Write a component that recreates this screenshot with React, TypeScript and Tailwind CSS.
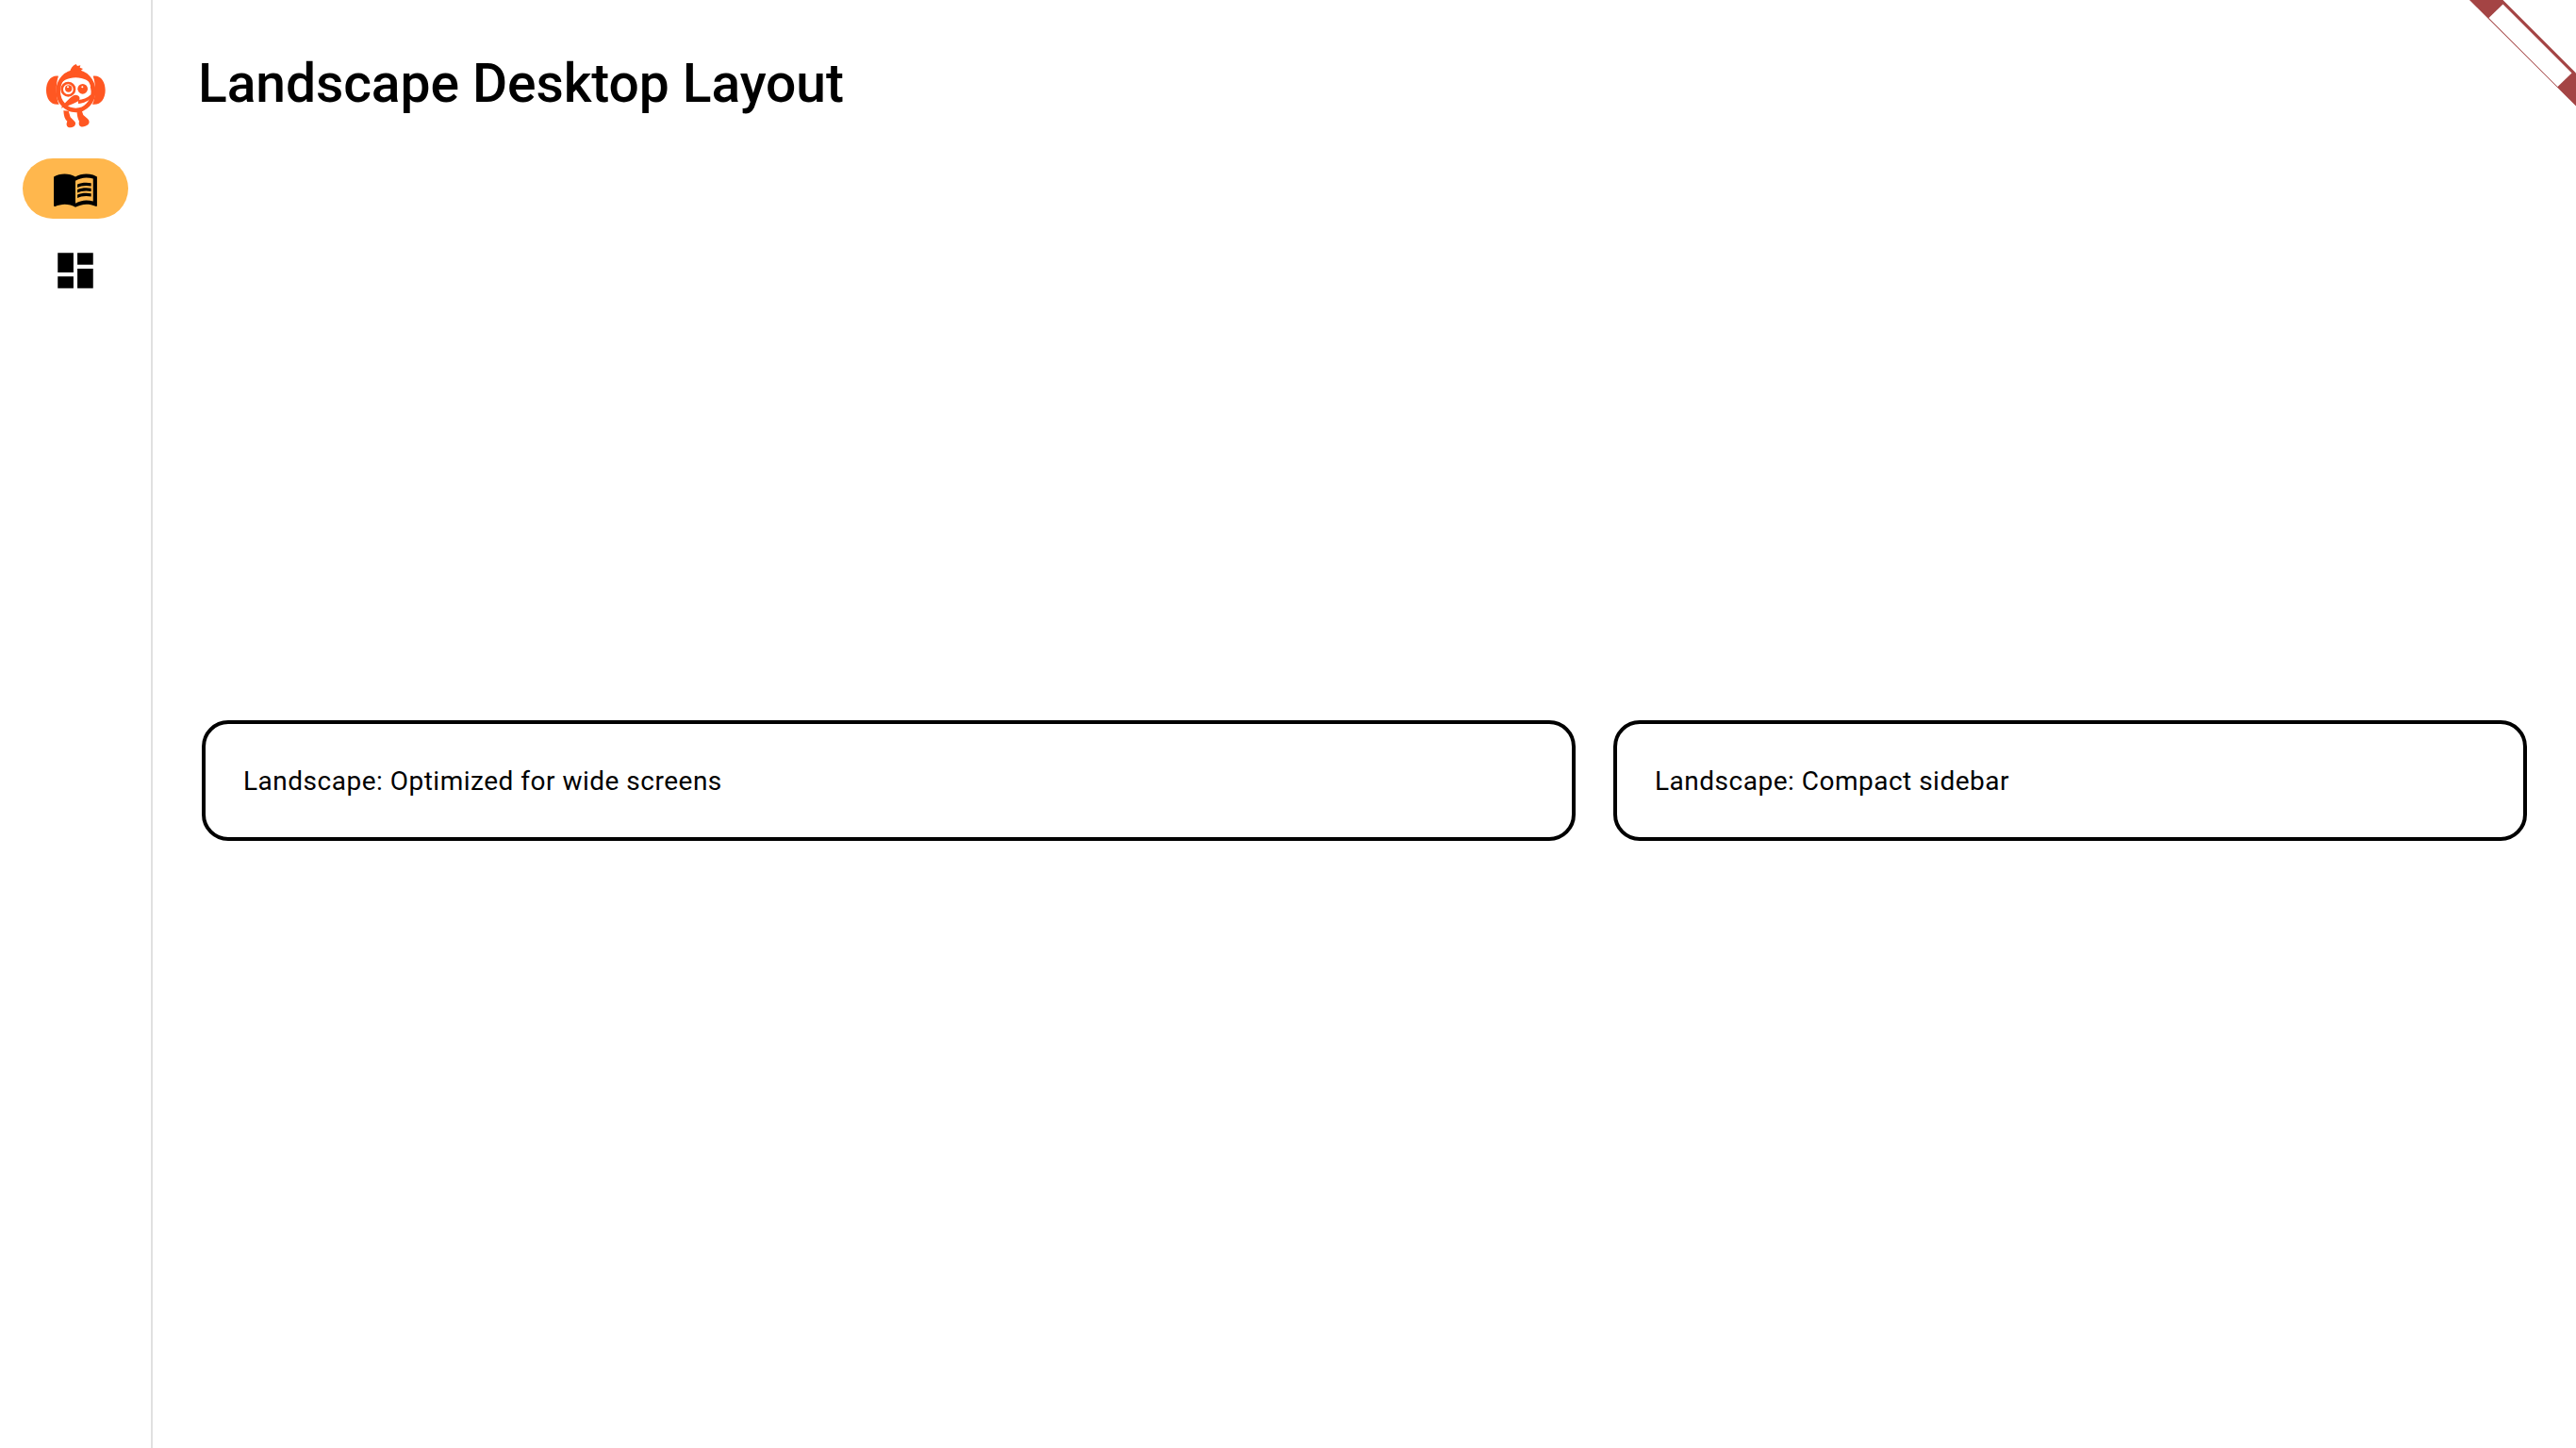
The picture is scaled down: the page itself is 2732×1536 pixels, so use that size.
import { MdDashboard, MdMenuBook } from 'react-icons/md';

function Logo() {
  return (
    <svg viewBox="0 0 216 228" className="h-[76px] w-[72px]" fill="#ff5722">
      {/* tuft */}
      <path d="M90 38c2-12 10-22 20-26l4 6 10-2-2 7 10 4-6 5 4 8c-12-4-28-6-40-2z" />
      {/* ear muffs */}
      <path d="M54 50C30 46 15 68 15 95s15 49 41 45c-10-20-12-65-2-90z" />
      <path d="M164 50c24-4 39 18 39 45s-15 49-41 45c10-20 12-65 2-90z" />
      {/* head */}
      <ellipse cx="109" cy="98" rx="56" ry="61" fill="none" stroke="#ff5722" strokeWidth="14" />
      <path d="M52 84c6-28 30-46 57-46s51 18 57 46c-12-18-32-29-57-29S64 66 52 84z" />
      <path d="M155 84c5 12 6 26 2 40l6-2c4-12 3-28-3-42z" />
      {/* eyes */}
      <circle cx="85" cy="92" r="20" fill="none" stroke="#ff5722" strokeWidth="8" />
      <circle cx="86" cy="90" r="11" />
      <circle cx="131" cy="91" r="16" />
      <circle cx="84" cy="85" r="3" fill="#fff" />
      <circle cx="130" cy="85" r="3" fill="#fff" />
      {/* beak and smile */}
      <path d="M62 152c8-12 24-30 38-39 8-5 19-2 21 5 2 6-2 11-8 14-16 8-34 15-51 20z" />
      <path d="M116 126c15 0 30-6 41-17l3 9c-9 11-26 19-43 20z" />
      {/* feet */}
      <path d="M70 160l16 1 6 20 14 14c6 8-1 18-13 19-10 1-14-6-13-14l2-6c-8-6-11-18-12-34z" />
      <path d="M112 158l15-1 6 17 13 11c7 6 8 14 2 20-6 5-18 9-24 5-5-3-6-9-4-16-5-9-7-22-8-36z" />
    </svg>
  );
}

function App() {
  return (
    <div className="relative flex h-screen w-full overflow-hidden bg-white font-['Roboto',sans-serif] text-black">
      <aside className="flex w-[162px] shrink-0 flex-col items-center border-r-2 border-[#e0e0e0] pt-16">
        <Logo />
        <div className="mt-7 flex h-16 w-28 items-center justify-center rounded-full bg-[#ffb74d]">
          <MdMenuBook size={50} />
        </div>
        <div className="mt-[30px] flex h-[50px] items-center justify-center">
          <MdDashboard size={50} />
        </div>
      </aside>

      <main className="flex min-w-0 flex-1 flex-col px-[52px]">
        <header className="h-[120px] shrink-0 pt-14">
          <h1 className="-ml-[4px] text-[57px] leading-[66px] font-medium tracking-[-0.1px]">Landscape Desktop Layout</h1>
        </header>
        <div className="grid flex-1 grid-cols-[1457fr_969fr] items-center gap-10">
          <div className="flex h-[128px] items-center rounded-[28px] border-4 border-black px-10 pt-0.5">
            <span className="text-[28px] tracking-[0.5px]">Landscape: Optimized for wide screens</span>
          </div>
          <div className="flex h-[128px] items-center rounded-[28px] border-4 border-black px-10 pt-0.5">
            <span className="text-[28px] tracking-[0.5px]">Landscape: Compact sidebar</span>
          </div>
        </div>
      </main>

      {/* corner ribbon */}
      <svg className="absolute top-0 right-0" width="132" height="120" viewBox="0 0 132 120">
        <path d="M19 0H54.5L132 77.5V112.5Z" fill="#a44444" />
        <path d="M54.5 4.5L127.5 77.5L112.5 92L39.5 19Z" fill="#fff" />
      </svg>
    </div>
  );
}

export default App;
